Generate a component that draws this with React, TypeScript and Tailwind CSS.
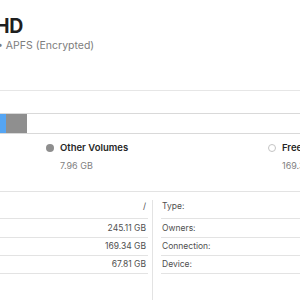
import React from "react";

export default function App() {
  const font = { fontFamily: "Inter, 'Liberation Sans', Arial, sans-serif" };
  const leftRows = [
    { v: "/", h: "h-[27px] pt-[3px]" },
    { v: "245.11 GB", h: "h-[19px]" },
    { v: "169.34 GB", h: "h-[18px]" },
    { v: "67.81 GB", h: "h-[18px]" },
  ];
  const rightRows = [
    { v: "Type:", h: "h-[27px] pt-[3px]" },
    { v: "Owners:", h: "h-[19px]" },
    { v: "Connection:", h: "h-[18px]" },
    { v: "Device:", h: "h-[18px]" },
  ];
  return (
    <div className="w-[300px] h-[300px] overflow-hidden bg-white flex flex-col" style={font}>
      {/* header */}
      <div className="h-[90px] shrink-0 flex flex-col pt-[14px]">
        <div className="whitespace-nowrap -ml-[108px] text-[19.5px] leading-[24px] font-bold text-[#1f1f1f] tracking-[-0.2px]">
          Macintosh HD
        </div>
        <div className="whitespace-nowrap -ml-[3px] mt-[1px] text-[10.5px] leading-[14px] text-[#7d7d7d]">
          • APFS (Encrypted)
        </div>
      </div>
      <div className="h-px bg-[#e6e6e6] shrink-0" />
      <div className="h-[22px] shrink-0" />
      {/* bar */}
      <div className="h-[21px] shrink-0 border-y border-[#d9d9d9] flex">
        <div className="w-[6px] shrink-0 bg-[#55a5f3]" />
        <div className="w-[21px] shrink-0 bg-[#8f8f8f]" />
        <div className="flex-1 bg-white" />
      </div>
      {/* legend */}
      <div className="h-[57px] shrink-0 flex pl-[46px] pt-[7px]">
        <div className="w-[222px] shrink-0 flex flex-col">
          <div className="flex items-center h-[14px]">
            <div className="w-[8px] h-[8px] shrink-0 rounded-full bg-[#8e8e8e] mr-[6px]" />
            <span className="text-[9.5px] font-semibold text-[#262626] whitespace-nowrap">Other Volumes</span>
          </div>
          <div className="pl-[14px] mt-[4px] h-[14px] leading-[14px] text-[9px] text-[#7f7f7f] whitespace-nowrap">
            7.96 GB
          </div>
        </div>
        <div className="shrink-0 flex flex-col">
          <div className="flex items-center h-[14px]">
            <div className="w-[8px] h-[8px] shrink-0 rounded-full border border-[#c4c4c4] bg-white mr-[6px]" />
            <span className="text-[9.5px] font-semibold text-[#262626] whitespace-nowrap">Free</span>
          </div>
          <div className="pl-[14px] mt-[4px] h-[14px] leading-[14px] text-[9px] text-[#7f7f7f] whitespace-nowrap">
            169.34 GB
          </div>
        </div>
      </div>
      <div className="h-px bg-[#e3e3e3] shrink-0" />
      {/* table */}
      <div className="flex flex-1">
        <div className="w-[148px] shrink-0 flex flex-col">
          {leftRows.map((r, i) => (
            <div
              key={i}
              className={`${r.h} shrink-0 flex items-center justify-end pr-[2px] border-b border-[#e3e3e3] text-[8.5px] text-[#4f4f4f] whitespace-nowrap`}
            >
              {r.v}
            </div>
          ))}
        </div>
        <div className="w-[13px] shrink-0 flex justify-start pl-[4px] pt-[8px]">
          <div className="w-px h-full bg-[#e3e3e3]" />
        </div>
        <div className="flex-1 flex flex-col">
          {rightRows.map((r, i) => (
            <div
              key={i}
              className={`${r.h} shrink-0 flex items-center pl-[1px] border-b border-[#e3e3e3] text-[8.5px] text-[#4f4f4f] whitespace-nowrap`}
            >
              {r.v}
            </div>
          ))}
        </div>
      </div>
    </div>
  );
}
